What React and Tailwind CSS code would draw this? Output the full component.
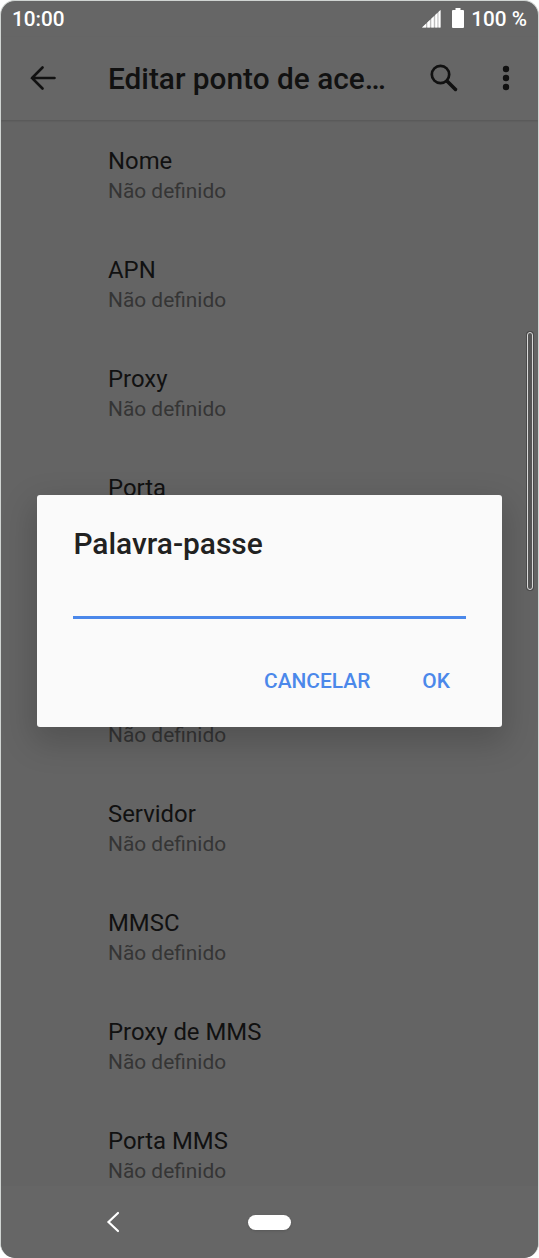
const UNSET = 'Não definido'

// the rows under the dialog keep their height but only show what sticks out
const FIELDS = [
  { id: 'name', label: 'Nome', value: UNSET },
  { id: 'apn', label: 'APN', value: UNSET },
  { id: 'proxy', label: 'Proxy', value: UNSET },
  { id: 'port', label: 'Porta' },
  { id: 'user' },
  { id: 'password', value: UNSET },
  { id: 'server', label: 'Servidor', value: UNSET },
  { id: 'mmsc', label: 'MMSC', value: UNSET },
  { id: 'mms-proxy', label: 'Proxy de MMS', value: UNSET },
  { id: 'mms-port', label: 'Porta MMS', value: UNSET },
]

function SignalIcon() {
  return (
    <svg className="h-[18px] w-[19px]" viewBox="0 0 19 18">
      <path d="M0 17.500 18.500 0v17.500z" fill="#bcbcbc" />
      <path d="M0 17.500 4 13.700v3.800zM5.300 17.500v-5l2.600-2.500v7.500zM9.300 17.500V8.700l2.500-2.400v11.200zM13.200 17.500V5l2.200-2.100v14.600zM16.500 17.500V1.900L18.500 0v17.500z" fill="#fff" />
    </svg>
  )
}

function BatteryIcon() {
  return (
    <svg className="h-5 w-3" viewBox="0 0 12 20" fill="#fff">
      <path d="M3.500 0h5v2H11a1 1 0 0 1 1 1v16a1 1 0 0 1-1 1H1a1 1 0 0 1-1-1V3a1 1 0 0 1 1-1h2.500z" />
    </svg>
  )
}

function StatusBar() {
  return (
    <div className="flex h-9 items-center justify-between px-[11px] text-[20.700px] leading-9 font-medium text-white">
      <span>10:00</span>
      <div className="flex items-center">
        <SignalIcon />
        <span className="mr-[7px] ml-[11px] flex -translate-y-px">
          <BatteryIcon />
        </span>
        <span>100 %</span>
      </div>
    </div>
  )
}

function AppBar() {
  return (
    <header className="relative flex h-[83px] items-center pb-[2px] pl-[28.500px] text-[#111] shadow-[0_1px_2px_rgba(0,0,0,0.15)]">
      <svg className="h-6 w-[26px]" viewBox="0 0 26 24" fill="none" stroke="currentColor" strokeWidth="2.600" strokeLinecap="round">
        <path d="M24.500 12H2M12.500 1.500 2 12l10.500 10.500" />
      </svg>
      <h1 className="ml-[52.500px] w-[300px] truncate pt-[3px] text-[29.800px] leading-9 font-medium">Editar ponto de ace…</h1>
      <svg className="ml-[21.500px] h-7 w-7 shrink-0" viewBox="0 0 28 28" fill="none" stroke="currentColor">
        <circle cx="10.500" cy="10.500" r="8.700" strokeWidth="2.700" />
        <path d="m17 17 8.500 8.500" strokeWidth="3.500" strokeLinecap="round" />
      </svg>
      <svg className="ml-[44.500px] h-[26px] w-2 shrink-0" viewBox="0 0 8 26" fill="currentColor">
        <circle cx="4" cy="4" r="3.200" />
        <circle cx="4" cy="13" r="3.200" />
        <circle cx="4" cy="22" r="3.200" />
      </svg>
    </header>
  )
}

function FieldRow({ label, value }) {
  return (
    <li className="flex h-[108.800px] flex-col justify-center pl-[107px]">
      <span className="h-[31px] text-[23.900px] leading-[31px] text-[#111]">{label}</span>
      <span className="h-[29px] text-[20.900px] leading-[29px] text-[#353535]">{value}</span>
    </li>
  )
}

function NavBar() {
  return (
    <nav className="flex h-[72px] shrink-0 items-center bg-[#666] pl-[105px]">
      <svg className="h-[22px] w-[14px]" viewBox="0 0 14 22" fill="none" stroke="#fff" strokeWidth="2.200" strokeLinecap="round">
        <path d="M12 2 2.500 11l9.500 9" />
      </svg>
      <span className="ml-[128px] h-[15px] w-[43px] rounded-full bg-white shadow" />
    </nav>
  )
}

function PasswordDialog() {
  return (
    <div className="absolute top-[493.500px] left-[36.400px] h-[232.500px] w-[464.200px] rounded-[3px] bg-[#fafafa] px-9 shadow-[0_12px_32px_4px_rgba(0,0,0,0.18)]">
      <h2 className="pt-[31px] text-[29.900px] leading-9 font-medium text-[#212121]">Palavra-passe</h2>
      <div className="mt-[54px] h-[3px] bg-[#4b88ea]" />
      <div className="mt-[46px] flex justify-end gap-[52px] pr-[15.700px] text-[20.900px] leading-8 font-medium text-[#4b88ea]">
        <button>CANCELAR</button>
        <button>OK</button>
      </div>
    </div>
  )
}

export default function App() {
  return (
    <div className="h-[1258px] w-[539px] bg-white font-[Roboto,sans-serif]">
      <div className="relative flex h-[1258px] flex-col overflow-hidden rounded-[15px] border-x border-t border-[#d0d4d2] bg-[#666]">
        <StatusBar />
        <AppBar />
        <ul className="min-h-0 flex-1 overflow-hidden bg-[#646464] pt-[2.100px]">
          {FIELDS.map((field) => (
            <FieldRow key={field.id} label={field.label} value={field.value} />
          ))}
        </ul>
        <NavBar />
        <PasswordDialog />
        <div className="absolute top-[330px] right-[4px] h-[260px] w-[8px] rounded-full bg-[#4a4a4a] p-px">
          <div className="h-full rounded-full border-[1.500px] border-[#d8d8d8] bg-[#555]" />
        </div>
      </div>
    </div>
  )
}
